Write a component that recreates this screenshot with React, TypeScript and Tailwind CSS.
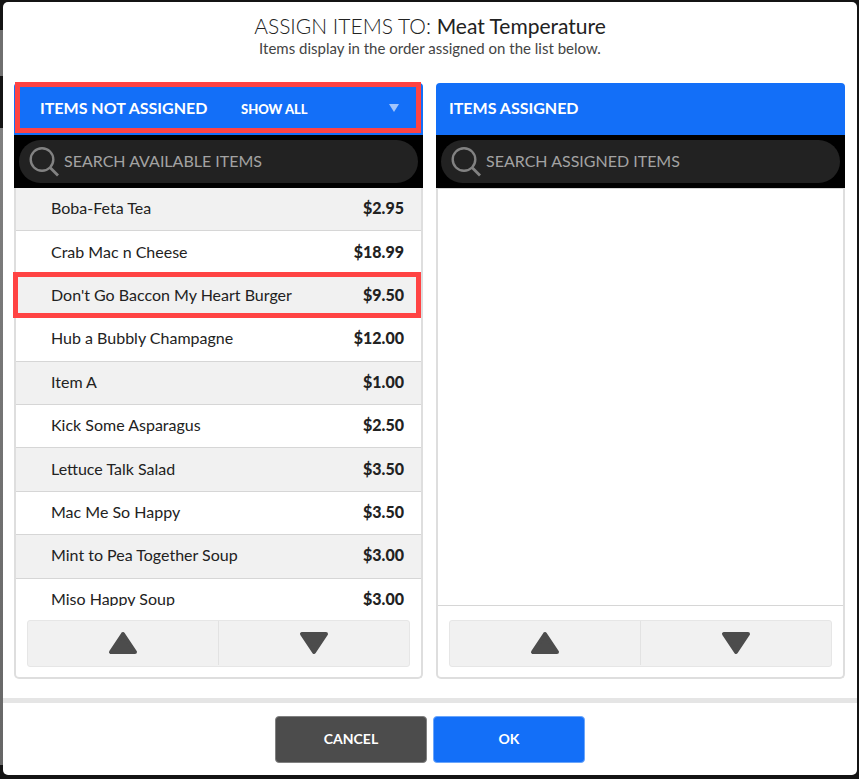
import { useId, useRef, useState } from 'react';
import type { ReactNode } from 'react';

type Item = {
  name: string;
  price: string;
};

const ITEMS: Item[] = [
  { name: 'Boba-Feta Tea', price: '$2.95' },
  { name: 'Crab Mac n Cheese', price: '$18.99' },
  { name: "Don't Go Baccon My Heart Burger", price: '$9.50' },
  { name: 'Hub a Bubbly Champagne', price: '$12.00' },
  { name: 'Item A', price: '$1.00' },
  { name: 'Kick Some Asparagus', price: '$2.50' },
  { name: 'Lettuce Talk Salad', price: '$3.50' },
  { name: 'Mac Me So Happy', price: '$3.50' },
  { name: 'Mint to Pea Together Soup', price: '$3.00' },
  { name: 'Miso Happy Soup', price: '$3.00' },
];

function SearchIcon() {
  return (
    <svg className="h-[30px] w-[30px] shrink-0" viewBox="0 0 30 30" fill="none" stroke="#828282" strokeWidth="2.4" aria-hidden="true">
      <circle cx="13" cy="12.5" r="11.3" />
      <path d="M21 20.5l8 8" strokeWidth="2.8" />
    </svg>
  );
}

function Triangle({ down = false }: { down?: boolean }) {
  return (
    <svg className="h-6 w-[30px]" viewBox="0 0 30 24" fill="#4c4c4c" stroke="#4c4c4c" strokeWidth="4" strokeLinejoin="round" aria-hidden="true">
      <path d={down ? 'M3 3h24L15 21z' : 'M3 21h24L15 3z'} />
    </svg>
  );
}

type PanelProps = {
  header: ReactNode;
  placeholder: string;
  items: Item[];
  onPick: (item: Item) => void;
  boxed?: boolean;
  callout?: boolean;
};

function Panel({ header, placeholder, items, onPick, boxed = false, callout = false }: PanelProps) {
  const searchId = useId();
  const listRef = useRef<HTMLDivElement>(null);
  const [query, setQuery] = useState('');

  const visible = items.filter(i => i.name.toLowerCase().includes(query.toLowerCase()));
  const scroll = (amount: number) => listRef.current?.scrollBy({ top: amount });

  return (
    <section className="min-w-0 flex-1 rounded-[5px] border-x-2 border-b-2 border-[#dedede]">
      <div className="-mx-[2px]">
        {header}
        <div className="bg-black p-[5px]">
          <div className="flex h-[43px] items-center gap-[5px] rounded-full bg-[#222] pr-4 pl-[10px]">
            <label htmlFor={searchId}>
              <span className="sr-only">{placeholder}</span>
              <SearchIcon />
            </label>
            <input
              id={searchId}
              type="text"
              value={query}
              onChange={e => setQuery(e.target.value)}
              placeholder={placeholder}
              className="h-full min-w-0 flex-1 bg-transparent pb-[2px] text-base text-white outline-none placeholder:text-[#a3a3a3]"
            />
          </div>
        </div>
      </div>

      <div className="relative">
        <div ref={listRef} className={`h-[418px] overflow-hidden ${boxed ? 'border-y border-[#d6d6d6]' : ''}`}>
          {visible.length > 0 && (
            <ul className={`grid auto-rows-fr ${visible.length === ITEMS.length ? 'h-[434px]' : ''}`}>
              {visible.map(item => (
                <li key={item.name} className="border-b border-[#d6d6d6] odd:bg-[#f1f1f1]">
                  <button
                    type="button"
                    onClick={() => onPick(item)}
                    className="flex h-full min-h-10 w-full items-center justify-between pr-[17px] pb-[2px] pl-[35px] text-base text-[#222]"
                  >
                    <span>{item.name}</span>
                    <span className="font-black">{item.price}</span>
                  </button>
                </li>
              ))}
            </ul>
          )}
        </div>
        {callout && (
          <span className="pointer-events-none absolute top-[84px] right-0 -left-[3px] h-[46px] border-[5px] border-[#ff4343]" />
        )}
      </div>

      <div className="mx-[11px] mt-[14px] mb-[10px] flex h-[47px] divide-x divide-[#e2e2e2] overflow-hidden rounded-[3px] border border-[#e6e6e6] bg-[#f1f1f1] pb-px">
        <button type="button" aria-label="Scroll up" onClick={() => scroll(-43)} className="flex flex-1 items-center justify-center">
          <Triangle />
        </button>
        <button type="button" aria-label="Scroll down" onClick={() => scroll(43)} className="flex flex-1 items-center justify-center">
          <Triangle down />
        </button>
      </div>
    </section>
  );
}

function App() {
  const [assigned, setAssigned] = useState<Item[]>([]);
  const available = ITEMS.filter(i => !assigned.includes(i));

  return (
    <div className="relative min-h-screen bg-[#141414] pt-[2px] pr-[2px] pb-1 pl-[3px] font-['Lato','Liberation_Sans',sans-serif]">
      {/* page behind the dialog */}
      <div className="absolute inset-y-0 left-0 flex w-2 flex-col" aria-hidden="true">
        <div className="h-[30px]" />
        <div className="h-[46px] bg-[#6f6f6f]" />
        <div className="h-[52px]" />
        <div className="flex-1 bg-linear-to-b from-[#808080] to-[#666]" />
        <div className="h-[14px]" />
      </div>

      <div role="dialog" aria-labelledby="dialog-title" className="relative rounded-[5px] bg-white">
        <header className="pt-3 text-center text-[#222]">
          <h1 id="dialog-title" className="text-[21px] leading-6 font-light">
            ASSIGN ITEMS TO: <span className="font-normal">Meat Temperature</span>
          </h1>
          <p className="text-[15px] leading-5 text-[#444]">Items display in the order assigned on the list below.</p>
        </header>

        <main className="mt-[25px] flex gap-[13px] pr-3 pl-[11px]">
          <Panel
            header={
              <div className="relative flex h-[52px] items-center rounded-t-[4px] bg-[#136ff8] pr-6 pb-[2px] pl-[26px] text-white">
                <h2 className="w-[201px] text-base font-bold whitespace-nowrap">ITEMS NOT ASSIGNED</h2>
                <div className="relative flex-1">
                  <select
                    aria-label="Filter items"
                    className="w-full appearance-none bg-transparent text-[13px] font-black outline-none"
                  >
                    <option>SHOW ALL</option>
                  </select>
                  <svg className="pointer-events-none absolute top-2 right-0 h-2 w-[10px]" viewBox="0 0 10 8" fill="#a1c5fc" aria-hidden="true">
                    <path d="M0 0h10L5 8z" />
                  </svg>
                </div>
                <span className="pointer-events-none absolute -top-[1px] right-[2px] bottom-[2px] left-[1px] border-[5px] border-[#ff4343]" />
              </div>
            }
            placeholder="SEARCH AVAILABLE ITEMS"
            items={available}
            onPick={item => setAssigned(prev => [...prev, item])}
            callout
          />
          <Panel
            header={
              <div className="flex h-[52px] items-center rounded-t-[4px] bg-[#136ff8] px-[13px] pb-[2px] text-white">
                <h2 className="text-base font-bold">ITEMS ASSIGNED</h2>
              </div>
            }
            placeholder="SEARCH ASSIGNED ITEMS"
            items={assigned}
            onPick={item => setAssigned(prev => prev.filter(i => i !== item))}
            boxed
          />
        </main>

        <footer className="mt-[19px] flex justify-center gap-[6px] border-t-[5px] border-[#e5e5e5] pt-[13px] pb-3">
          <button type="button" className="h-[47px] w-[152px] rounded-[4px] border border-[#808080] bg-[#4c4c4c] pb-[2px] text-sm font-bold text-white">
            CANCEL
          </button>
          <button type="button" className="h-[47px] w-[152px] rounded-[4px] border border-[#6ba6fb] bg-[#136ff8] pb-[2px] text-sm font-bold text-white">
            OK
          </button>
        </footer>
      </div>
    </div>
  );
}

export default App;
